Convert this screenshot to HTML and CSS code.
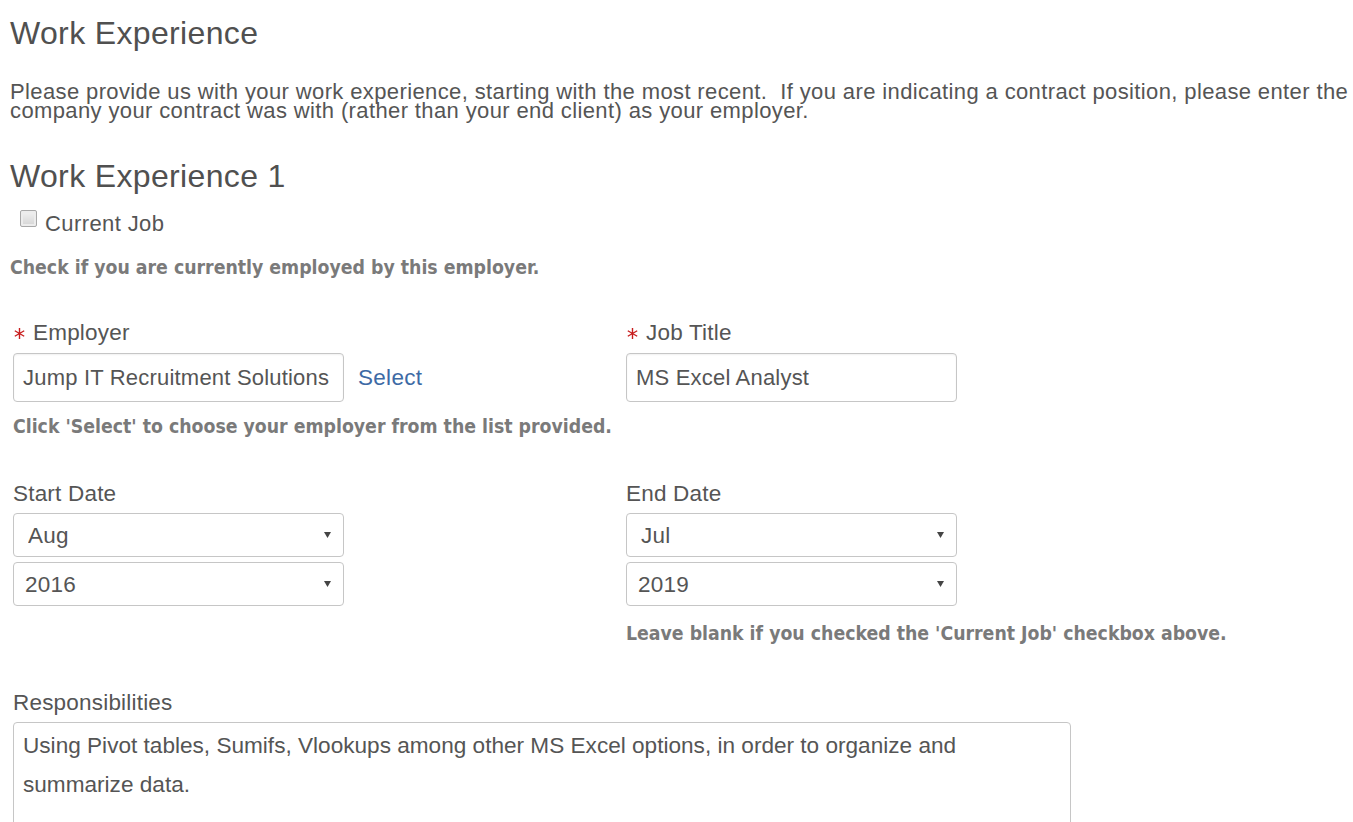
FILE: index.html
```html
<!DOCTYPE html>
<html lang="en">
<head>
<meta charset="utf-8">
<title>Work Experience</title>
<link rel="stylesheet" href="styles.css">
</head>
<body>
<div class="page">
  <h1 class="title">Work Experience</h1>
  <p class="intro">Please provide us with your work experience, starting with the most recent.&nbsp; If you are indicating a contract position, please enter the company your contract was with (rather than your end client) as your employer.</p>

  <h2 class="subtitle">Work Experience 1</h2>
  <label class="check-row"><input type="checkbox" class="check"><span>Current Job</span></label>
  <p class="help help-check">Check if you are currently employed by this employer.</p>

  <div class="form">
    <div class="grid2 row-employer">
      <div class="field">
        <div class="label"><svg class="req" width="11" height="11" viewBox="0 0 11 11"><path d="M5.5 0V11M0.8 2.75L10.2 8.25M0.8 8.25L10.2 2.75" stroke="#c81e1e" stroke-width="1.4" fill="none"/></svg><span>Employer</span></div>
        <div class="input-row">
          <input class="text-input" type="text" value="Jump IT Recruitment Solutions">
          <a class="link" href="#">Select</a>
        </div>
        <p class="help help-select">Click 'Select' to choose your employer from the list provided.</p>
      </div>
      <div class="field">
        <div class="label"><svg class="req" width="11" height="11" viewBox="0 0 11 11"><path d="M5.5 0V11M0.8 2.75L10.2 8.25M0.8 8.25L10.2 2.75" stroke="#c81e1e" stroke-width="1.4" fill="none"/></svg><span>Job Title</span></div>
        <div class="input-row">
          <input class="text-input" type="text" value="MS Excel Analyst">
        </div>
      </div>
    </div>

    <div class="grid2 row-dates">
      <div class="field">
        <div class="label">Start Date</div>
        <div class="select-wrap">
          <select class="select month"><option>Aug</option></select>
          <svg class="arrow" width="7" height="6" viewBox="0 0 7 6"><path d="M0 0H7L3.5 6Z" fill="#444"/></svg>
        </div>
        <div class="select-wrap">
          <select class="select"><option>2016</option></select>
          <svg class="arrow" width="7" height="6" viewBox="0 0 7 6"><path d="M0 0H7L3.5 6Z" fill="#444"/></svg>
        </div>
      </div>
      <div class="field">
        <div class="label">End Date</div>
        <div class="select-wrap">
          <select class="select month"><option>Jul</option></select>
          <svg class="arrow" width="7" height="6" viewBox="0 0 7 6"><path d="M0 0H7L3.5 6Z" fill="#444"/></svg>
        </div>
        <div class="select-wrap">
          <select class="select"><option>2019</option></select>
          <svg class="arrow" width="7" height="6" viewBox="0 0 7 6"><path d="M0 0H7L3.5 6Z" fill="#444"/></svg>
        </div>
        <p class="help help-end">Leave blank if you checked the 'Current Job' checkbox above.</p>
      </div>
    </div>

    <div class="field resp">
      <div class="label">Responsibilities</div>
      <textarea class="textarea">Using Pivot tables, Sumifs, Vlookups among other MS Excel options, in order to organize and summarize data.</textarea>
    </div>
  </div>
</div>
</body>
</html>
```

FILE: styles.css
```css
html, body {
  margin: 0;
  padding: 0;
  background: #fff;
}
body {
  font-family: "Liberation Sans", Arial, sans-serif;
  color: #555;
  overflow: hidden;
}
.page {
  padding-left: 10px;
}
.title {
  margin: 15px 0 0;
  font-size: 32px;
  letter-spacing: 0.35px;
  line-height: 36px;
  font-weight: normal;
  color: #505050;
}
.intro {
  margin: 31px 0 0;
  font-size: 22px;
  letter-spacing: 0.38px;
  line-height: 19px;
  color: #555;
  width: 1343px;
}
.subtitle {
  margin: 38px 0 0;
  font-size: 32px;
  letter-spacing: 0.35px;
  line-height: 36px;
  font-weight: normal;
  color: #505050;
}
.check-row {
  display: flex;
  align-items: center;
  gap: 8px;
  margin: 17px 0 0 10px;
  font-size: 22px;
  letter-spacing: 0.4px;
  line-height: 26px;
  color: #555;
}
.check {
  appearance: none;
  -webkit-appearance: none;
  margin: 0;
  width: 17px;
  height: 17px;
  border: 1px solid #a8a8a8;
  border-radius: 2px;
  background: linear-gradient(#f2f2f2, #d4d4d4);
  box-shadow: inset 0 0 0 2px #ececec;
  position: relative;
  top: -6px;
}
.help {
  margin: 0;
  font-family: "DejaVu Sans Condensed", "DejaVu Sans", sans-serif;
  font-weight: bold;
  font-size: 19.3px;
  line-height: 20px;
  color: #7a7a7a;
}
.help-check {
  margin-top: 21px;
}
.form {
  margin-left: 3px;
}
.grid2 {
  display: grid;
  grid-template-columns: 613px 613px;
}
.row-employer {
  margin-top: 43px;
}
.label {
  display: flex;
  align-items: center;
  gap: 8px;
  font-size: 22.5px;
  letter-spacing: 0.2px;
  line-height: 24px;
  color: #555;
}
.req {
  flex: none;
  margin-left: 1px;
}
.input-row {
  display: flex;
  align-items: center;
  gap: 14px;
  margin-top: 8px;
}
.text-input {
  box-sizing: border-box;
  width: 331px;
  height: 49px;
  margin: 0;
  padding: 0 4px 0 9px;
  border: 1px solid #c6c6c6;
  border-radius: 4px;
  box-shadow: inset 0 1px 2px rgba(0,0,0,0.06);
  font-family: "Liberation Sans", Arial, sans-serif;
  font-size: 22px;
  letter-spacing: 0.2px;
  color: #555;
  background: #fff;
  outline: none;
}
.link {
  font-size: 22.5px;
  letter-spacing: 0.3px;
  color: #3d6aa5;
  text-decoration: none;
}
.help-select {
  margin-top: 15px;
}
.row-dates {
  margin-top: 45px;
}
.select-wrap {
  position: relative;
  width: 331px;
  margin-top: 7px;
}
.select-wrap + .select-wrap {
  margin-top: 5px;
}
.select {
  appearance: none;
  -webkit-appearance: none;
  box-sizing: border-box;
  display: block;
  width: 331px;
  height: 44px;
  margin: 0;
  padding: 0 11px;
  border: 1px solid #c6c6c6;
  border-radius: 4px;
  background: #fff;
  font-family: "Liberation Sans", Arial, sans-serif;
  font-size: 22.5px;
  letter-spacing: 0.2px;
  color: #555;
  outline: none;
}
.select.month {
  padding-left: 14px;
}
.arrow {
  position: absolute;
  right: 13px;
  top: 19px;
  pointer-events: none;
}
.help-end {
  margin-top: 18px;
}
.resp {
  margin-top: 47px;
}
.textarea {
  box-sizing: border-box;
  display: block;
  width: 1058px;
  height: 130px;
  margin: 7px 0 0;
  padding: 3px 9px;
  border: 1px solid #c6c6c6;
  border-radius: 4px;
  font-family: "Liberation Sans", Arial, sans-serif;
  font-size: 22.6px;
  letter-spacing: 0;
  line-height: 39px;
  color: #555;
  resize: none;
  outline: none;
}
```
